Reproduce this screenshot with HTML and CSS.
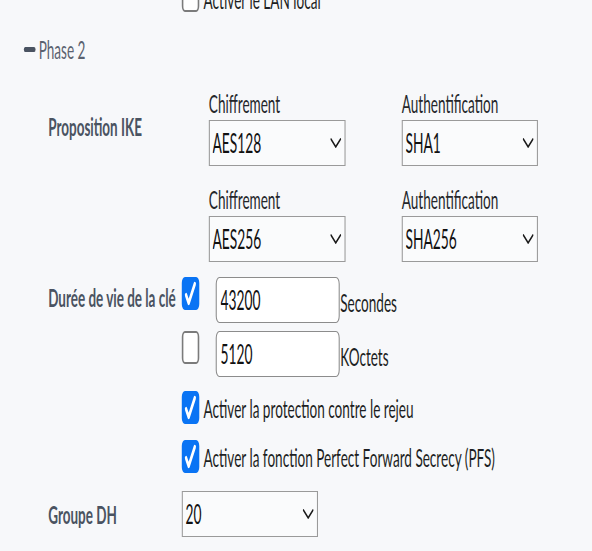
FILE: index.html
```html
<!DOCTYPE html>
<html lang="fr">
<head>
<meta charset="utf-8">
<title>Phase 2</title>
<link rel="stylesheet" href="styles.css">
</head>
<body>
<div class="page">
  <div class="row row-top">
    <div class="label"></div>
    <div class="check-line">
      <span class="cb"></span>
      <span class="text">Activer le LAN local</span>
    </div>
  </div>

  <div class="phase"><span class="minus"></span><span>Phase 2</span></div>

  <div class="row row-ike">
    <div class="label label-ike">Proposition IKE</div>
    <div class="ike-grid">
      <div class="field">
        <div class="field-label">Chiffrement</div>
        <div class="select-wrap">
          <select class="select"><option>AES128</option></select>
          <svg class="arrow" viewBox="0 0 21 10"><path d="M1.5 1.2 L10.5 8.8 L19.5 1.2" /></svg>
        </div>
      </div>
      <div class="field">
        <div class="field-label">Authentification</div>
        <div class="select-wrap">
          <select class="select"><option>SHA1</option></select>
          <svg class="arrow" viewBox="0 0 21 10"><path d="M1.5 1.2 L10.5 8.8 L19.5 1.2" /></svg>
        </div>
      </div>
      <div class="field">
        <div class="field-label">Chiffrement</div>
        <div class="select-wrap">
          <select class="select"><option>AES256</option></select>
          <svg class="arrow" viewBox="0 0 21 10"><path d="M1.5 1.2 L10.5 8.8 L19.5 1.2" /></svg>
        </div>
      </div>
      <div class="field">
        <div class="field-label">Authentification</div>
        <div class="select-wrap">
          <select class="select"><option>SHA256</option></select>
          <svg class="arrow" viewBox="0 0 21 10"><path d="M1.5 1.2 L10.5 8.8 L19.5 1.2" /></svg>
        </div>
      </div>
    </div>
  </div>

  <div class="row row-life">
    <div class="label label-life">Durée de vie de la clé</div>
    <div class="lifetime">
      <div class="life-line">
        <span class="cb cb-on"><svg class="tick" viewBox="0 0 33 33"><path d="M8 18 L13 26 L24.5 7" /></svg></span>
        <input class="num" type="text" value="43200">
        <span class="text unit">Secondes</span>
      </div>
      <div class="life-line">
        <span class="cb"></span>
        <input class="num" type="text" value="5120">
        <span class="text unit">KOctets</span>
      </div>
    </div>
  </div>

  <div class="row row-opt1">
    <div class="label"></div>
    <div class="check-line center">
      <span class="cb cb-on"><svg class="tick" viewBox="0 0 33 33"><path d="M8 18 L13 26 L24.5 7" /></svg></span>
      <span class="text">Activer la protection contre le rejeu</span>
    </div>
  </div>

  <div class="row row-opt2">
    <div class="label"></div>
    <div class="check-line center">
      <span class="cb cb-on"><svg class="tick" viewBox="0 0 33 33"><path d="M8 18 L13 26 L24.5 7" /></svg></span>
      <span class="text">Activer la fonction Perfect Forward Secrecy (PFS)</span>
    </div>
  </div>

  <div class="row row-dh">
    <div class="label">Groupe DH</div>
    <div class="select-wrap dh">
      <select class="select"><option>20</option></select>
      <svg class="arrow" viewBox="0 0 21 10"><path d="M1.5 1.2 L10.5 8.8 L19.5 1.2" /></svg>
    </div>
  </div>
</div>
</body>
</html>
```

FILE: styles.css
```css
html, body {
  margin: 0;
  padding: 0;
  background: #f7f8fa;
  overflow: hidden;
}

body {
  font-family: Lato, "Noto Sans", "Liberation Sans", sans-serif;
  color: #1d1f23;
}

.page {
  width: 1117px;
  transform: scaleX(0.53);
  transform-origin: 0 0;
}

.row {
  display: flex;
  align-items: flex-start;
  padding-left: 91px;
}

.label {
  width: 252px;
  flex: none;
  font-weight: 700;
  font-size: 25.4px;
  line-height: 30px;
  color: #4a5361;
  white-space: nowrap;
}

.text {
  font-size: 25.6px;
  line-height: 26px;
  color: #1d1f23;
  white-space: nowrap;
}

/* checkboxes */
.cb {
  width: 33px;
  height: 33px;
  box-sizing: border-box;
  flex: none;
  border-style: solid;
  border-color: #7b7b7b;
  border-width: 2px 3px;
  border-radius: 6px;
  background: #ffffff;
  display: flex;
}

.cb-on {
  background: #0a74f4;
  border-color: #0a74f4;
}

.tick {
  width: 33px;
  height: 33px;
  margin: -2px -3px;
  flex: none;
}

.tick path {
  fill: none;
  stroke: #ffffff;
  stroke-width: 4.4;
  stroke-linecap: round;
  stroke-linejoin: round;
}

.check-line {
  display: flex;
  align-items: flex-start;
  gap: 8px;
}

.check-line.center {
  align-items: center;
}

/* partially visible row at the top */
.row-top {
  margin-top: -21px;
}

.row-top .text {
  margin-top: 7px;
}

/* phase header */
.phase {
  display: flex;
  align-items: center;
  gap: 6px;
  padding-left: 45px;
  margin-top: 22px;
  font-size: 25.6px;
  line-height: 30px;
  color: #5b6270;
}

.minus {
  width: 22px;
  height: 5px;
  border-radius: 2.5px;
  background: #4a5361;
}

/* IKE proposals */
.row-ike {
  margin-top: 26px;
}

.label-ike {
  margin-top: 21px;
}

.ike-grid {
  display: grid;
  grid-template-columns: 258px 257px;
  column-gap: 106px;
  row-gap: 20px;
  padding-left: 51px;
}

.field-label {
  font-size: 25.6px;
  line-height: 26px;
  color: #25272b;
  margin-bottom: 4px;
  white-space: nowrap;
}

.select-wrap {
  position: relative;
}

.select {
  appearance: none;
  -webkit-appearance: none;
  display: block;
  width: 100%;
  height: 46px;
  box-sizing: border-box;
  margin: 0;
  border-style: solid;
  border-color: #9a9a9a;
  border-width: 1px 2px;
  border-radius: 0;
  background: #fafbfc;
  font-family: Lato, "Noto Sans", sans-serif;
  font-size: 26px;
  color: #111111;
  padding: 0 34px 0 5px;
}

.arrow {
  position: absolute;
  right: 8px;
  top: 18px;
  width: 21px;
  height: 10px;
  pointer-events: none;
}

.arrow path {
  fill: none;
  stroke: #1a1a1a;
  stroke-width: 2.2;
  stroke-linecap: round;
  stroke-linejoin: round;
}

/* lifetime */
.row-life {
  margin-top: 15px;
}

.label-life {
  margin-top: 5px;
}

.lifetime {
  display: flex;
  flex-direction: column;
  gap: 8px;
}

.life-line {
  display: flex;
  align-items: flex-start;
}

.num {
  width: 234px;
  height: 46px;
  box-sizing: border-box;
  margin: 0 1px 0 31px;
  border-style: solid;
  border-color: #8c8c8c;
  border-width: 1px 2px;
  border-radius: 7px;
  background: #ffffff;
  font-family: Lato, "Noto Sans", sans-serif;
  font-size: 26px;
  color: #111111;
  padding: 0 7px;
  outline: none;
}

.unit {
  margin-top: 12px;
}

/* options */
.row-opt1 {
  margin-top: 14px;
}

.row-opt2 {
  margin-top: 16px;
}

/* DH group */
.row-dh {
  margin-top: 18px;
  align-items: center;
}

.dh {
  width: 257px;
}
```
